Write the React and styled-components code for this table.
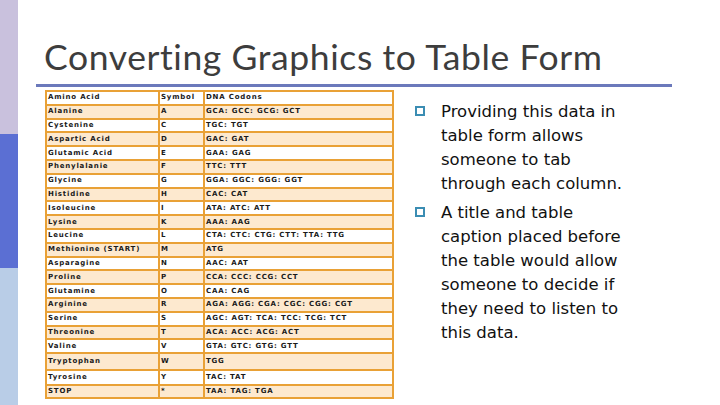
import React from 'react';
import styled, { createGlobalStyle } from 'styled-components';

const GlobalStyle = createGlobalStyle`
  html, body {
    margin: 0;
    padding: 0;
    background: #ffffff;
  }
  #root {
    width: 720px;
    height: 405px;
    overflow: hidden;
  }
`;

const Slide = styled.div`
  display: flex;
  width: 720px;
  height: 405px;
  background: #ffffff;
`;

const Strip = styled.div`
  display: flex;
  flex-direction: column;
  width: 18px;
  flex-shrink: 0;
`;

const StripBlock = styled.div`
  flex: ${(p) => p.size};
  background: ${(p) => p.color};
`;

const Main = styled.div`
  flex: 1;
  display: flex;
  flex-direction: column;
`;

const TitleBar = styled.div`
  margin: 0 0 0 18px;
  width: 636px;
  height: 87px;
  border-bottom: 3px solid #6b79bb;
  display: flex;
  align-items: flex-end;
  box-sizing: border-box;
  padding: 0 0 7px 8px;
`;

const Title = styled.h1`
  margin: 0;
  font-family: 'Lato', 'Open Sans', sans-serif;
  font-weight: 400;
  font-size: 35.5px;
  line-height: 40px;
  color: #3d3d3d;
  letter-spacing: 0.6px;
`;

const Body = styled.div`
  display: flex;
  padding: 3px 0 0 27px;
`;

const Table = styled.table`
  border-collapse: collapse;
  width: 347px;
  table-layout: fixed;
  font-family: Verdana, 'DejaVu Sans', sans-serif;
  font-size: 7px;
  font-weight: bold;
  letter-spacing: 0.8px;
  color: #1a1a1a;
`;

const Row = styled.tr`
  background: ${(p) => (p.shaded ? '#fde9cf' : '#ffffff')};
  height: ${(p) => p.h}px;
`;

const Cell = styled.td`
  border: 2px solid #e9a136;
  padding: 0 0 0 1px;
  white-space: nowrap;
  overflow: hidden;
  vertical-align: middle;
  line-height: 9px;
`;

const Points = styled.ul`
  list-style: none;
  margin: 0;
  padding: 10px 0 0 21px;
`;

const Point = styled.li`
  display: flex;
  gap: 16px;
  font-family: Verdana, 'DejaVu Sans', sans-serif;
  font-size: 16.5px;
  line-height: 24px;
  color: #111111;
  & + & {
    margin-top: 5px;
  }
`;

const PointText = styled.span`
  width: 196px;
`;

const Box = styled.span`
  flex-shrink: 0;
  width: 10px;
  height: 10px;
  box-sizing: border-box;
  border: 2px solid #3b8db3;
  margin-top: 6px;
`;

const rows = [
  ['Amino Acid', 'Symbol', 'DNA Codons'],
  ['Alanine', 'A', 'GCA: GCC: GCG: GCT'],
  ['Cystenine', 'C', 'TGC: TGT'],
  ['Aspartic Acid', 'D', 'GAC: GAT'],
  ['Glutamic Acid', 'E', 'GAA: GAG'],
  ['Phenylalanie', 'F', 'TTC: TTT'],
  ['Glycine', 'G', 'GGA: GGC: GGG: GGT'],
  ['Histidine', 'H', 'CAC: CAT'],
  ['Isoleucine', 'I', 'ATA: ATC: ATT'],
  ['Lysine', 'K', 'AAA: AAG'],
  ['Leucine', 'L', 'CTA: CTC: CTG: CTT: TTA: TTG'],
  ['Methionine (START)', 'M', 'ATG'],
  ['Asparagine', 'N', 'AAC: AAT'],
  ['Proline', 'P', 'CCA: CCC: CCG: CCT'],
  ['Glutamine', 'O', 'CAA: CAG'],
  ['Arginine', 'R', 'AGA: AGG: CGA: CGC: CGG: CGT'],
  ['Serine', 'S', 'AGC: AGT: TCA: TCC: TCG: TCT'],
  ['Threonine', 'T', 'ACA: ACC: ACG: ACT'],
  ['Valine', 'V', 'GTA: GTC: GTG: GTT'],
  ['Tryptophan', 'W', 'TGG'],
  ['Tyrosine', 'Y', 'TAC: TAT'],
  ['STOP', '*', 'TAA: TAG: TGA'],
];

const heights = { 19: 17, 20: 14.5 };

export default function App() {
  return (
    <>
      <GlobalStyle />
      <Slide>
        <Strip>
          <StripBlock size={134} color="#c9c1dd" />
          <StripBlock size={134} color="#5b6fd3" />
          <StripBlock size={137} color="#b9cde7" />
        </Strip>
        <Main>
          <TitleBar>
            <Title>Converting Graphics to Table Form</Title>
          </TitleBar>
          <Body>
            <Table>
              <colgroup>
                <col style={{ width: '113px' }} />
                <col style={{ width: '45px' }} />
                <col style={{ width: '189px' }} />
              </colgroup>
              <tbody>
                {rows.map((r, i) => (
                  <Row key={r[0]} shaded={i % 2 === 1} h={heights[i] || 13.8}>
                    <Cell>{r[0]}</Cell>
                    <Cell>{r[1]}</Cell>
                    <Cell>{r[2]}</Cell>
                  </Row>
                ))}
              </tbody>
            </Table>
            <Points>
              <Point>
                <Box />
                <PointText>Providing this data in table form allows someone to tab through each column.</PointText>
              </Point>
              <Point>
                <Box />
                <PointText>A title and table caption placed before the table would allow someone to decide if they need to listen to this data.</PointText>
              </Point>
            </Points>
          </Body>
        </Main>
      </Slide>
    </>
  );
}
